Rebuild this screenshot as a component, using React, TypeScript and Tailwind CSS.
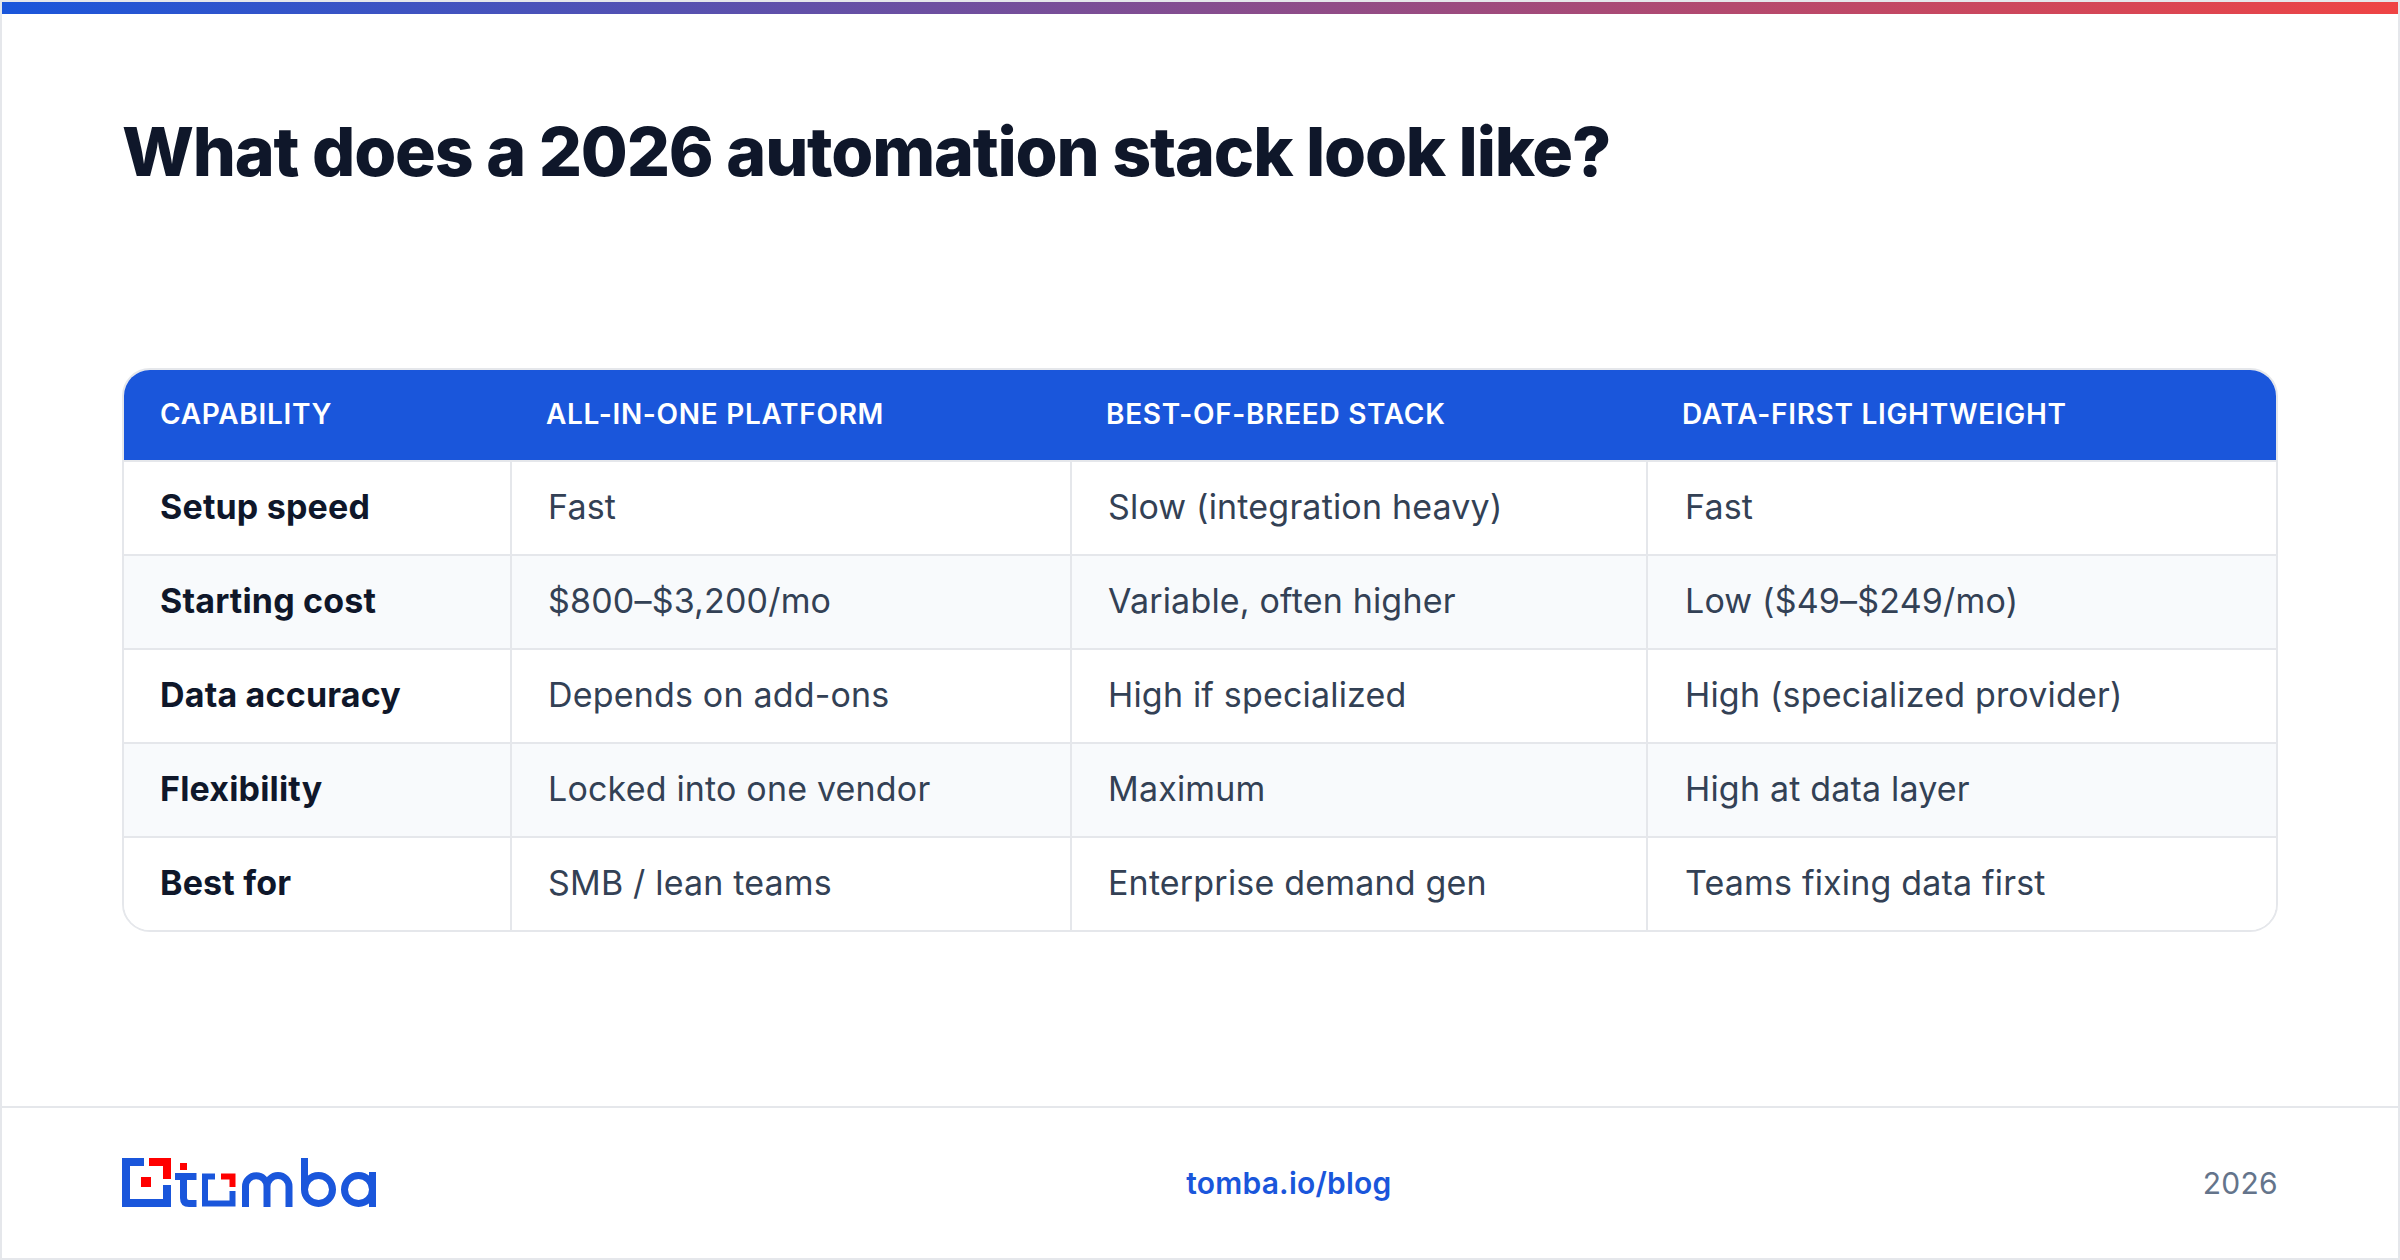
const rows = [
  ["Setup speed", "Fast", "Slow (integration heavy)", "Fast"],
  ["Starting cost", "$800–$3,200/mo", "Variable, often higher", "Low ($49–$249/mo)"],
  ["Data accuracy", "Depends on add-ons", "High if specialized", "High (specialized provider)"],
  ["Flexibility", "Locked into one vendor", "Maximum", "High at data layer"],
  ["Best for", "SMB / lean teams", "Enterprise demand gen", "Teams fixing data first"],
];

const headers = ["Capability", "All-in-one platform", "Best-of-breed stack", "Data-first lightweight"];

const rowHeights = ["h-[94px]", "h-[94px]", "h-[94px]", "h-[94px]", "h-[93px]"];

function Logo() {
  return (
    <svg className="mb-px" width="255" height="49" viewBox="0 0 255 49" fill="none">
      <path d="M0 0H22V8H8V41H41V27H49V49H0Z" fill="#1a56db" />
      <path d="M27 0H49V21H41V8H27Z" fill="#ff0000" />
      <rect x="19" y="19" width="10" height="10" fill="#ff0000" />
      <rect x="58" y="5" width="7" height="7" fill="#ff0000" />
      <path d="M61.500 15V40Q61.500 45.500 67 45.500H74.500" stroke="#1a56db" strokeWidth="7" />
      <path d="M53 18.500H74.500" stroke="#1a56db" strokeWidth="7" />
      <path d="M93 18.500H83V45.500H110.500V33" stroke="#1a56db" strokeWidth="6" />
      <path d="M99 18.500H110.500V29" stroke="#ff0000" strokeWidth="6" />
      <path d="M123.500 49V28.500A10.750 10.750 0 0 1 145 28.500V49M145 28.500A11 11 0 0 1 167 28.500V49" stroke="#1a56db" strokeWidth="7" />
      <path d="M182.500 0V31.500" stroke="#1a56db" strokeWidth="7" />
      <circle cx="196.500" cy="31.500" r="14" stroke="#1a56db" strokeWidth="7" />
      <circle cx="236.500" cy="31.500" r="14" stroke="#1a56db" strokeWidth="7" />
      <path d="M250.500 14V49" stroke="#1a56db" strokeWidth="7" />
    </svg>
  );
}

export default function App() {
  return (
    <div className="flex h-[1260px] w-[2400px] flex-col border-2 border-[#e5e7eb] bg-white font-['Inter',sans-serif]">
      <div className="h-3 bg-linear-to-r/srgb from-[#1a56db] to-[#ef4444]" />
      <div className="flex flex-1 flex-col px-[120px]">
        <h1 className="mt-[96px] text-[68px] leading-[82px] font-extrabold tracking-[-1.2px] text-[#0f172a]">
          What does a 2026 automation stack look like?
        </h1>
        <div className="mt-[176px] overflow-hidden rounded-[28px] border-2 border-[#e5e7eb]">
          <table className="w-full table-fixed border-collapse">
            <colgroup>
              <col className="w-[387px]" />
              <col className="w-[560px]" />
              <col className="w-[576px]" />
              <col />
            </colgroup>
            <thead>
              <tr className="h-[91px] bg-[#1a56db]">
                {headers.map((h, j) => (
                  <th
                    key={h}
                    className={
                      (j === 0 ? "pl-9 " : "pl-[35px] ") +
                      "border-b-2 border-[#e5e7eb] pr-9 pb-[3px] text-left text-[28px] font-semibold tracking-[0.7px] text-white uppercase"
                    }
                  >
                    {h}
                  </th>
                ))}
              </tr>
            </thead>
            <tbody>
              {rows.map((row, i) => (
                <tr key={row[0]} className={rowHeights[i] + (i % 2 === 1 ? " bg-[#f8fafc]" : " bg-white")}>
                  {row.map((cell, j) => (
                    <td
                      key={j}
                      className={
                        (j === 0 ? "font-bold text-[#0f172a] " : "font-normal text-[#334155] ") +
                        (j < 3 ? "border-r-2 pl-9 " : "pl-[37px] ") +
                        (i < 4 ? "border-b-2 " : "") +
                        "border-[#e5e7eb] pr-9 pb-[4px] text-[34px] tracking-[0.18px]"
                      }
                    >
                      {cell}
                    </td>
                  ))}
                </tr>
              ))}
            </tbody>
          </table>
        </div>
      </div>
      <footer className="flex h-[152px] items-center justify-between border-t-2 border-[#e5e7eb] px-[120px]">
        <Logo />
        <span className="mr-[2px] text-[30px] font-semibold tracking-[0.2px] text-[#1a56db]">tomba.io/blog</span>
        <span className="text-[30px] tracking-[0.3px] text-[#64748b]">2026</span>
      </footer>
    </div>
  );
}
